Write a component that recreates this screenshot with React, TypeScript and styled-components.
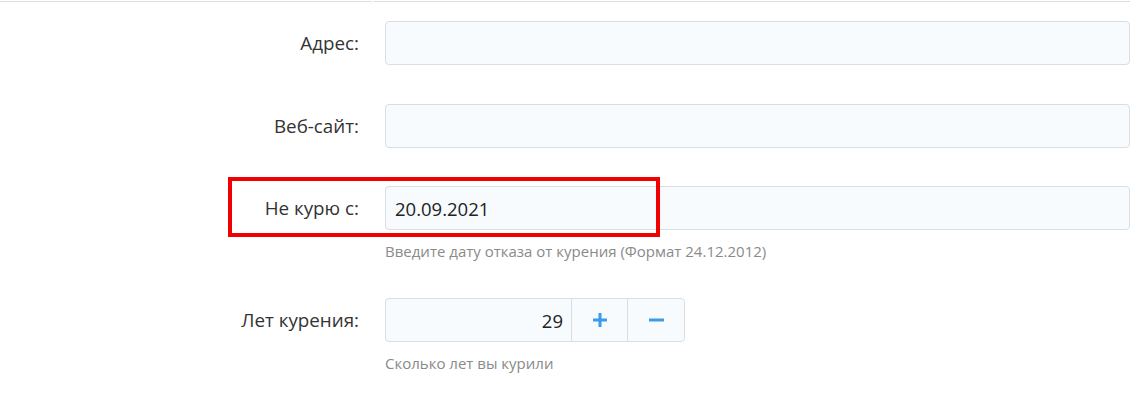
import styled, { createGlobalStyle } from "styled-components";

const GlobalStyle = createGlobalStyle`
  html, body {
    margin: 0;
    padding: 0;
    background: #ffffff;
  }
  body {
    font-family: "Open Sans", "Liberation Sans", sans-serif;
    color: #333333;
  }
`;

const Page = styled.div`
  position: relative;
  width: 1140px;
  height: 398px;
  overflow: hidden;
`;

const TopRule = styled.div`
  display: flex;
  gap: 2px;
  padding-top: 1px;
  width: 1130px;

  div {
    height: 1px;
    background: #dcdcdc;
  }
  div:first-child {
    width: 372px;
  }
  div:last-child {
    flex: 1;
  }
`;

const Form = styled.div`
  display: flex;
  flex-direction: column;
  padding-top: 19px;
`;

const Row = styled.div<{ $gap: number }>`
  display: grid;
  grid-template-columns: 360px 745px;
  column-gap: 25px;
  margin-bottom: ${(p) => p.$gap}px;
`;

const Label = styled.label`
  height: 44px;
  display: flex;
  align-items: center;
  justify-content: flex-end;
  font-size: 18.8px;
  color: #333333;
  padding-right: 1px;
`;

const Field = styled.div`
  display: flex;
  flex-direction: column;
`;

const Input = styled.div`
  height: 44px;
  box-sizing: border-box;
  border: 1px solid #dadde1;
  border-radius: 4px;
  background: #f7fbfe;
  display: flex;
  align-items: center;
  padding: 0 9px;
  font-size: 18.5px;
  color: #222222;
`;

const Help = styled.div`
  margin-top: 11px;
  font-size: 15px;
  color: #8a8a8a;
`;

const Spinner = styled.div`
  width: 300px;
  height: 44px;
  box-sizing: border-box;
  border: 1px solid #dadde1;
  border-radius: 4px;
  background: #f7fbfe;
  display: flex;
`;

const SpinValue = styled.div`
  flex: 1;
  display: flex;
  align-items: center;
  justify-content: flex-end;
  padding-right: 8px;
  font-size: 18.5px;
  color: #222222;
`;

const SpinButton = styled.div<{ $w: number }>`
  width: ${(p) => p.$w}px;
  border-left: 1px solid #dadde1;
  display: flex;
  align-items: center;
  justify-content: center;
  color: #3d9ae8;
`;

const Highlight = styled.div`
  position: absolute;
  left: 228px;
  top: 177px;
  width: 432px;
  height: 60px;
  box-sizing: border-box;
  border: 4px solid #f00000;
  pointer-events: none;
`;

const Plus = () => (
  <svg width="16" height="16" viewBox="0 0 16 16">
    <path d="M8 1v14M1 8h14" stroke="currentColor" strokeWidth="3" />
  </svg>
);

const Minus = () => (
  <svg width="17" height="16" viewBox="0 0 17 16">
    <path d="M1 8h15" stroke="currentColor" strokeWidth="3" />
  </svg>
);

export default function App() {
  return (
    <Page>
      <GlobalStyle />
      <TopRule>
        <div />
        <div />
      </TopRule>
      <Form>
        <Row $gap={39}>
          <Label>Адрес:</Label>
          <Input />
        </Row>
        <Row $gap={38}>
          <Label>Веб-сайт:</Label>
          <Input />
        </Row>
        <Row $gap={37}>
          <Label>Не курю с:</Label>
          <Field>
            <Input>20.09.2021</Input>
            <Help>Введите дату отказа от курения (Формат 24.12.2012)</Help>
          </Field>
        </Row>
        <Row $gap={0}>
          <Label>Лет курения:</Label>
          <Field>
            <Spinner>
              <SpinValue>29</SpinValue>
              <SpinButton $w={55}>
                <Plus />
              </SpinButton>
              <SpinButton $w={56}>
                <Minus />
              </SpinButton>
            </Spinner>
            <Help>Сколько лет вы курили</Help>
          </Field>
        </Row>
      </Form>
      <Highlight />
    </Page>
  );
}
